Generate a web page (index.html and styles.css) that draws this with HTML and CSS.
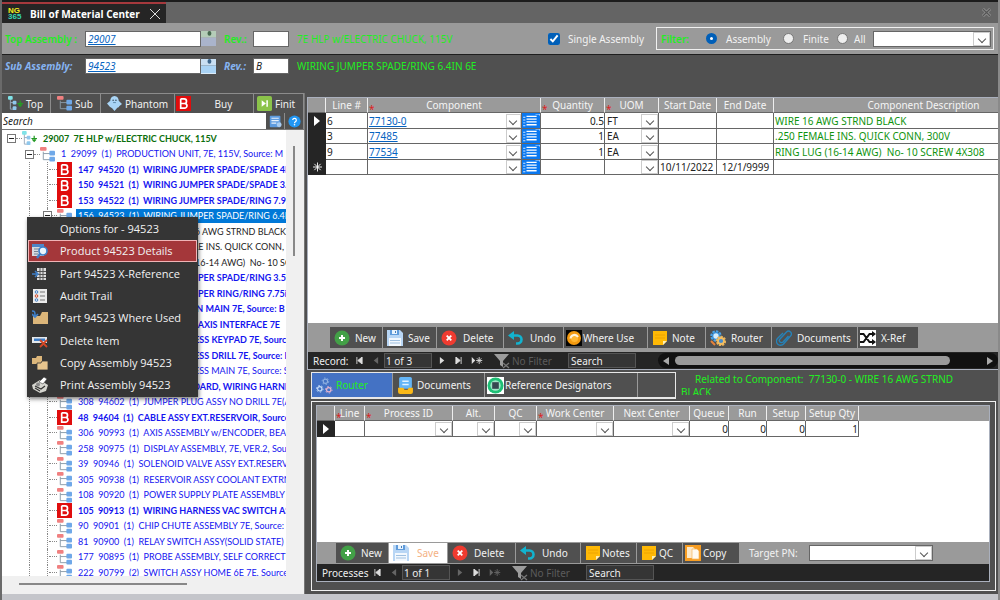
FILE: index.html
```html
<!DOCTYPE html>
<html lang="en">
<head>
  <meta charset="UTF-8" />
  <title>Bill of Material Center</title>
  <meta name="viewport" content="width=device-width, initial-scale=1" />
  <link rel="stylesheet" href="styles.css">
</head>
<body>
  <!-- Icon sprite -->
  <svg class="sprite" aria-hidden="true">
    <symbol id="i-sub" viewBox="0 0 16 16">
      <path d="M3.500 5v8.500H11M3.500 7H11" fill="none" stroke="#8a9aa8"/>
      <rect x="0" y="0" width="7" height="4" rx="1" fill="#f08080"/>
      <rect x="10" y="4" width="6" height="5" rx="1" fill="#6fa8e8"/>
      <rect x="10" y="10.500" width="6" height="5" rx="1" fill="#6fa8e8"/>
    </symbol>
    <symbol id="i-top" viewBox="0 0 16 16">
      <path d="M2.500 3v11H6M2.500 7H6" fill="none" stroke="#9ab"/>
      <rect x="0" y="0" width="5" height="4" rx="1" fill="#7fe3e8"/>
      <rect x="5" y="5" width="4" height="4" rx="1" fill="#8fc7ec"/>
      <rect x="5" y="11" width="4" height="4" rx="1" fill="#8fc7ec"/>
      <path d="M10 8h6M13 5v6M11 9l2 2 2-2" fill="none" stroke="#259a25" stroke-width="1.300"/>
    </symbol>
    <symbol id="i-buy" viewBox="0 0 16 16">
      <rect width="16" height="16" fill="#e00d0d"/>
      <path d="M5 3v10h4a2.700 2.500 0 0 0 0-5H5M5 3h3.700a2.400 2.400 0 0 1 0 5" fill="none" stroke="#fff" stroke-width="1.800"/>
    </symbol>
    <symbol id="i-ghost" viewBox="0 0 16 16">
      <path d="M8 0c3 0 4.500 2.500 4.500 5L16 8.500 13 11c0 1-1 1.500-2 1.500L8 16l-2.500-3L3 11.500 0 8l3.500-3C3.500 2.500 5 0 8 0z" fill="#a9d4f5"/>
      <circle cx="6.500" cy="4.500" r=".8" fill="#345"/><circle cx="9.500" cy="4.500" r=".8" fill="#345"/>
      <path d="M6.500 7h3" stroke="#5b87a8"/>
    </symbol>
    <symbol id="i-finite" viewBox="0 0 16 16">
      <rect width="16" height="16" rx="2" fill="#8bc34a"/>
      <path d="M5 4.500l4.500 3.500L5 11.500zM10 4.500h1.600v7H10z" fill="#fff"/>
    </symbol>
    <symbol id="i-form" viewBox="0 0 16 16">
      <rect x="1" y="1" width="13" height="14" rx="1" fill="#5d9be0"/>
      <path d="M3 4h9M3 7h9M3 10h6" stroke="#e5f0fb" stroke-width="1.500"/>
      <circle cx="12.500" cy="12" r="3" fill="#a8ccf2"/>
    </symbol>
    <symbol id="i-help" viewBox="0 0 16 16">
      <circle cx="8" cy="8" r="7.500" fill="#2196f3"/>
      <path d="M5.800 6.200a2.200 2.200 0 1 1 3.300 2C8.200 8.700 8 9 8 10" fill="none" stroke="#fff" stroke-width="1.500"/>
      <circle cx="8" cy="12" r="1" fill="#fff"/>
    </symbol>
    <symbol id="i-window" viewBox="0 0 16 16">
      <rect x="0" y="0" width="16" height="7" fill="#c9dff2"/>
      <rect x="0" y="7" width="16" height="9" fill="#a9d3f5"/>
      <rect x="7" y="0" width="4" height="5" rx="2" fill="#3d668c"/>
      <path d="M0 15.500h16" stroke="#e1eefa"/>
    </symbol>
    <symbol id="i-window-dim" viewBox="0 0 16 16">
      <rect x="0" y="0" width="16" height="7" fill="#b5cdb8"/>
      <rect x="0" y="7" width="16" height="9" fill="#aab4cb"/>
      <rect x="7" y="0" width="4" height="5" rx="2" fill="#47684f"/>
    </symbol>
    <symbol id="i-new" viewBox="0 0 16 16">
      <circle cx="8" cy="8" r="7.500" fill="#43a047"/>
      <path d="M8 5v6M5 8h6" stroke="#fff" stroke-width="2"/>
    </symbol>
    <symbol id="i-save" viewBox="0 0 16 16">
      <path d="M0 0h13l3 3v13H0z" fill="#b8d6f5"/>
      <path d="M3 0h9v5H3z" fill="#5f9bdb"/><path d="M5 0h5v4H5z" fill="#e8f3fd"/><path d="M8 1h1v2H8z" fill="#447db8"/>
      <path d="M2 8h12v8H2z" fill="#f2f8fe"/>
      <path d="M3 10.500h10M3 13h10" stroke="#9fc0e0"/>
    </symbol>
    <symbol id="i-delete" viewBox="0 0 16 16">
      <circle cx="8" cy="8" r="7.500" fill="#ef3b30"/>
      <path d="M5.700 5.700l4.600 4.600M10.300 5.700l-4.600 4.600" stroke="#fff" stroke-width="1.800"/>
    </symbol>
    <symbol id="i-undo" viewBox="0 0 16 16">
      <path d="M3 5.500h6.500a4 4 0 0 1 0 8H8" fill="none" stroke="#12b3cf" stroke-width="2.600"/>
      <path d="M0 5.500L6 1v9z" fill="#12b3cf"/>
    </symbol>
    <symbol id="i-where" viewBox="0 0 16 16">
      <rect width="16" height="16" fill="#050505"/>
      <circle cx="8" cy="8" r="7" fill="#f39a10"/>
      <circle cx="8.500" cy="8.500" r="3.500" fill="#ffb733"/>
      <path d="M4.500 8.500a4 4 0 0 1 7.500-1.500" fill="none" stroke="#fff3dc" stroke-width="2"/>
    </symbol>
    <symbol id="i-note" viewBox="0 0 16 16">
      <path d="M1 1h14v10l-4 4H1z" fill="#ffb906"/>
      <path d="M15 11h-4v4z" fill="#fff0b5"/>
      <path d="M3 5h10M3 8h10" stroke="#eda400"/>
    </symbol>
    <symbol id="i-router" viewBox="0 0 16 16">
      <circle cx="6" cy="6" r="4.200" fill="none" stroke="#4ba3e8" stroke-width="3" stroke-dasharray="2.200 1"/>
      <circle cx="6" cy="6" r="3.400" fill="#d5ecfb" stroke="#3a8fd4" stroke-width="1.500"/>
      <circle cx="11" cy="11" r="4" fill="none" stroke="#e8b25a" stroke-width="2.500" stroke-dasharray="2 1"/>
      <circle cx="11" cy="11" r="3" fill="#4a8ccc" stroke="#f3bd60" stroke-width="1.800"/>
      <path d="M1 11l4 4" stroke="#e7823a" stroke-width="2"/>
    </symbol>
    <symbol id="i-clip" viewBox="0 0 16 16">
      <path d="M12.500 6L7 12a2 2 0 0 1-3-3l6.500-7a2.700 2.700 0 0 1 4 4L7.500 14a4 4 0 0 1-6-5.500L7 3" fill="none" stroke="#2682b8" stroke-width="1.400"/>
    </symbol>
    <symbol id="i-xref" viewBox="0 0 16 16">
      <rect width="16" height="16" fill="#fff"/>
      <path d="M0 4h3.500l6 8H13M0 12h3.500l6-8H13" fill="none" stroke="#111" stroke-width="2"/>
      <path d="M12 1l4 3-4 3zM12 9l4 3-4 3z" fill="#111"/>
    </symbol>
    <symbol id="i-funnel" viewBox="0 0 16 16">
      <path d="M0 1h15L9 8v6l-3-2V8z" fill="#9c9c9c"/>
      <path d="M9 10l6 5M15 10l-6 5" stroke="#777" stroke-width="1.300"/>
    </symbol>
    <symbol id="i-cogs" viewBox="0 0 18 18">
      <g fill="none" stroke-width="1.200">
        <circle cx="10" cy="4.500" r="2.300" stroke="#8fb0e0"/><circle cx="10" cy="4.500" r="3.500" stroke="#8fb0e0" stroke-width="1" stroke-dasharray="1.600 2"/>
        <circle cx="4" cy="12.500" r="2.300" stroke="#c8def8"/><circle cx="4" cy="12.500" r="3.500" stroke="#c8def8" stroke-width="1" stroke-dasharray="1.600 2"/>
        <circle cx="13.500" cy="13.500" r="2.300" stroke="#e9b6cf"/><circle cx="13.500" cy="13.500" r="3.500" stroke="#e9b6cf" stroke-width="1" stroke-dasharray="1.600 2"/>
      </g>
    </symbol>
    <symbol id="i-tray" viewBox="0 0 16 16">
      <rect x="2" y="0" width="12" height="11" rx="1.500" fill="#64b5f6"/>
      <path d="M5 4h6M5 7h6" stroke="#e3f2fd" stroke-width="1.300"/>
      <path d="M1 10h5l1 2h3l1-2h4v4a2 2 0 0 1-2 2H3a2 2 0 0 1-2-2z" fill="#fbb917"/>
    </symbol>
    <symbol id="i-chip" viewBox="0 0 18 18">
      <rect width="18" height="18" fill="#fff"/>
      <circle cx="9" cy="9" r="8.500" fill="#1fbf75"/>
      <circle cx="9" cy="9" r="5.500" fill="#9fe6c4"/>
      <rect x="5.500" y="5.500" width="7" height="7" fill="#37474f"/>
    </symbol>
    <symbol id="i-copy" viewBox="0 0 16 16">
      <rect width="16" height="16" fill="#f79d22"/>
      <path d="M2 2h6l2 2v9H2z" fill="#fde9c8"/>
      <path d="M7 4h5l2 2v8H7z" fill="#fffaf0" stroke="#f3b45c" stroke-width=".7"/>
    </symbol>
    <symbol id="i-sheet" viewBox="0 0 16 15" preserveAspectRatio="none">
      <rect width="16" height="15" fill="#0a78f0"/>
      <path d="M4 2.500h9M4 5.500h9M4 8.500h9M4 11.500h9" stroke="#fff" stroke-width="1.400"/>
      <path d="M1 3.500h2M1 6.500h2M1 9.500h2M1 12.500h2M12 0h4v2" fill="none" stroke="#cfe5ff"/>
    </symbol>
    <symbol id="i-product" viewBox="0 0 16 16">
      <path d="M0 2h12v11H0z" fill="#d7dbe0"/><path d="M0 1h12v3H0z" fill="#4e86c8"/>
      <path d="M2 6h5M2 8.500h4M2 11h4" stroke="#768494"/>
      <circle cx="11" cy="8" r="4" fill="#eaf4fc" stroke="#3f7fc8" stroke-width="1.700"/>
      <path d="M8 11l-3 4" stroke="#3f7fc8" stroke-width="2.400"/>
    </symbol>
    <symbol id="i-cross" viewBox="0 0 16 16">
      <rect x="5" y="2" width="9" height="12" fill="#dcdcdc"/>
      <path d="M5 5.500h9M5 8.500h9M5 11.500h9M8 2v12M11 2v12" stroke="#555"/>
      <path d="M0 8h5M3 5l3 3-3 3" fill="none" stroke="#3f7fc8" stroke-width="1.500"/>
    </symbol>
    <symbol id="i-audit" viewBox="0 0 16 16">
      <rect x="1" y="1" width="14" height="14" fill="#ececec"/>
      <circle cx="4.500" cy="4" r="1.300" fill="none" stroke="#3f7fc8"/><circle cx="4.500" cy="8" r="1.300" fill="none" stroke="#d24726"/><circle cx="4.500" cy="12" r="1.300" fill="none" stroke="#3f7fc8"/>
      <path d="M8 4h5M8 8h5M8 12h5" stroke="#777"/>
    </symbol>
    <symbol id="i-used" viewBox="0 0 16 16">
      <path d="M1 6h7l2-4h6v12H1z" fill="#dcb67a"/>
      <path d="M0 1c3 0 3 1 3 5M0 4l3 3 3-3" fill="none" stroke="#3f7fc8" stroke-width="1.600"/>
    </symbol>
    <symbol id="i-remove" viewBox="0 0 16 16">
      <rect x="0" y="4" width="15" height="6" fill="#e4e8ec"/><rect x="2" y="5.500" width="11" height="2.500" fill="#3f7fc8"/>
      <path d="M8 7l7 7M15 7l-7 7" stroke="#d24726" stroke-width="1.800"/>
    </symbol>
    <symbol id="i-folders" viewBox="0 0 16 16">
      <path d="M0 3h4l1-2h5v8H0z" fill="#dcb67a"/>
      <path d="M5 8h4l1-2h6v9H5z" fill="#e6c48d" stroke="#353535" stroke-width=".8"/>
    </symbol>
    <symbol id="i-print" viewBox="0 0 16 16">
      <path d="M0 8l8-5 8 5-2 6-6 2-7-4z" fill="#d5d5cf"/>
      <path d="M7 5l5-5 3 2-4 5z" fill="#fff" stroke="#444" stroke-width=".6"/>
      <path d="M3 9l6 3 4-3M3 11l5 3" fill="none" stroke="#333" stroke-width="1.200"/>
      <circle cx="6" cy="7.500" r="2" fill="#888"/>
    </symbol>
  </svg>

  <header class="titlebar">
    <div class="doc-tab">
      <span class="logo"><b>NG</b><i>365</i></span>
      <strong>Bill of Material Center</strong>
      <button class="tab-close" aria-label="Close tab"><svg viewBox="0 0 10 10"><path d="M0 0l10 10M10 0L0 10" stroke="#ddd"/></svg></button>
    </div>
    <button class="win-close" aria-label="Close window"><svg viewBox="0 0 10 10"><path d="M1 1l8 8M9 1L1 9" stroke="#999" stroke-width="3"/><path d="M1 1l8 8M9 1L1 9" stroke="#555" stroke-width="1.500"/></svg></button>
  </header>

  <section class="bar bar-top">
    <label class="bar-label" for="top-pn">Top Assembly :</label>
    <input class="field pn" id="top-pn" value="29007">
    <button class="pick" aria-label="Open top assembly"><svg><use href="#i-window-dim"/></svg></button>
    <label class="rev-label" for="top-rev">Rev.:</label>
    <input class="field rev" id="top-rev" value="">
    <span class="bar-desc">7E HLP w/ELECTRIC CHUCK, 115V</span>
    <label class="single"><input type="checkbox" checked> Single Assembly</label>
    <div class="filter">
      <span class="filter-title">Filter:</span>
      <label class="f-assembly"><input type="radio" name="filter" checked> Assembly</label>
      <label class="f-finite"><input type="radio" name="filter"> Finite</label>
      <label class="f-all"><input type="radio" name="filter"> All</label>
      <span class="combo boxed"><select aria-label="Filter value"><option></option></select></span>
    </div>
  </section>

  <section class="bar bar-sub">
    <label class="bar-label" for="sub-pn">Sub Assembly:</label>
    <input class="field pn" id="sub-pn" value="94523">
    <button class="pick" aria-label="Open sub assembly"><svg><use href="#i-window"/></svg></button>
    <label class="rev-label" for="sub-rev">Rev.:</label>
    <input class="field rev" id="sub-rev" value="B">
    <span class="bar-desc">WIRING JUMPER SPADE/RING 6.4IN 6E</span>
  </section>

  <main>
    <aside class="side">
      <div class="side-tools">
        <button class="t-top"><svg><use href="#i-top"/></svg>Top</button>
        <button class="t-sub"><svg><use href="#i-sub"/></svg>Sub</button>
        <button class="t-phantom"><svg><use href="#i-ghost"/></svg>Phantom</button>
        <button class="t-buy"><svg><use href="#i-buy"/></svg><span>Buy</span></button>
        <button class="t-finit"><svg><use href="#i-finite"/></svg>Finit</button>
      </div>
      <div class="side-search">
        <input placeholder="Search" aria-label="Search tree">
        <button aria-label="Form"><svg><use href="#i-form"/></svg></button>
        <button aria-label="Help"><svg><use href="#i-help"/></svg></button>
      </div>

      <div class="tree-box">
        <ul class="tree">
          <li class="root"><span class="exp"></span><span class="dash"></span><svg><use href="#i-top"/></svg><b>29007  7E HLP w/ELECTRIC CHUCK, 115V</b></li>
          <li class="lvl1"><span class="exp"></span><span class="dash"></span><svg><use href="#i-sub"/></svg><span>1  29099  (1)  PRODUCTION UNIT, 7E, 115V, Source: M</span></li>
          <li><i></i><i class="tee"></i><svg><use href="#i-buy"/></svg><b>147  94520  (1)  WIRING JUMPER SPADE/SPADE 4IN</b></li>
          <li><i></i><i class="tee"></i><svg><use href="#i-buy"/></svg><b>150  94521  (1)  WIRING JUMPER SPADE/SPADE 3.5IN</b></li>
          <li><i></i><i class="tee"></i><svg><use href="#i-buy"/></svg><b>153  94522  (1)  WIRING JUMPER SPADE/RING 7.9IN</b></li>
          <li class="selected"><i></i><i class="tee"><em class="exp"></em></i><svg><use href="#i-sub"/></svg><span>156  94523  (1)  WIRING JUMPER SPADE/RING 6.4IN 6E</span></li>
          <li class="part"><i></i><i></i><span>6  77130-0  (0.5) WIRE 16 AWG STRND BLACK, Source: B</span></li>
          <li class="part"><i></i><i></i><span>3  77485  (1) .250 FEMALE INS. QUICK CONN, 300V</span></li>
          <li class="part"><i></i><i></i><span>9  77534  (1) RING LUG (16-14 AWG)  No- 10 SCREW</span></li>
          <li><i></i><i class="tee"></i><svg><use href="#i-buy"/></svg><b>159  94524  (1)  WIRING JUMPER SPADE/RING 3.5IN</b></li>
          <li><i></i><i class="tee"></i><svg><use href="#i-buy"/></svg><b>162  94525  (1)  WIRING JUMPER RING/RING 7.75in</b></li>
          <li><i></i><i class="tee"></i><svg><use href="#i-buy"/></svg><b>165  94526  (1)  CONNECTION MAIN 7E, Source: B</b></li>
          <li><i></i><i class="tee"></i><svg><use href="#i-buy"/></svg><b>168  94527  (1)  HARNESS  K-AXIS INTERFACE 7E</b></li>
          <li><i></i><i class="tee"></i><svg><use href="#i-buy"/></svg><b>171  94528  (1)  WIRE HARNESS KEYPAD 7E, Source: B</b></li>
          <li><i></i><i class="tee"></i><svg><use href="#i-buy"/></svg><b>174  94529  (1)  WIRE HARNESS DRILL 7E, Source: B</b></li>
          <li><i></i><i class="tee"></i><svg><use href="#i-sub"/></svg><span>300  94600  (1)  WIRE HARNESS MAIN 7E, Source: S</span></li>
          <li><i></i><i class="tee"></i><svg><use href="#i-buy"/></svg><b>303  94601  (1)  MAIN KEYBOARD, WIRING HARNESS</b></li>
          <li><i></i><i class="tee"></i><svg><use href="#i-sub"/></svg><span>308  94602  (1)  JUMPER PLUG ASSY NO DRILL 7E(A, Source: M</span></li>
          <li><i></i><i class="tee"></i><svg><use href="#i-buy"/></svg><b>48  94604  (1)  CABLE ASSY EXT.RESERVOIR, Source: B</b></li>
          <li><i></i><i class="tee"></i><svg><use href="#i-sub"/></svg><span>306  90993  (1)  AXIS ASSEMBLY w/ENCODER, BEARING</span></li>
          <li><i></i><i class="tee"></i><svg><use href="#i-sub"/></svg><span>258  90975  (1)  DISPLAY ASSEMBLY, 7E, VER.2, Source: M</span></li>
          <li><i></i><i class="tee"></i><svg><use href="#i-sub"/></svg><span>39  90946  (1)  SOLENOID VALVE ASSY EXT.RESERVOIR</span></li>
          <li><i></i><i class="tee"></i><svg><use href="#i-sub"/></svg><span>305  90938  (1)  RESERVOIR ASSY COOLANT EXTRNAL</span></li>
          <li><i></i><i class="tee"></i><svg><use href="#i-sub"/></svg><span>108  90920  (1)  POWER SUPPLY PLATE ASSEMBLY 7E, Source</span></li>
          <li><i></i><i class="tee"></i><svg><use href="#i-buy"/></svg><b>105  90913  (1)  WIRING HARNESS VAC SWITCH ASSY</b></li>
          <li><i></i><i class="tee"></i><svg><use href="#i-sub"/></svg><span>90  90901  (1)  CHIP CHUTE ASSEMBLY 7E, Source: M</span></li>
          <li><i></i><i class="tee"></i><svg><use href="#i-sub"/></svg><span>81  90900  (1)  RELAY SWITCH ASSY(SOLID STATE) 7E, Source</span></li>
          <li><i></i><i class="tee"></i><svg><use href="#i-sub"/></svg><span>177  90895  (1)  PROBE ASSEMBLY, SELF CORRECTING</span></li>
          <li><i></i><i class="tee"></i><svg><use href="#i-sub"/></svg><span>222  90799  (2)  SWITCH ASSY HOME 6E 7E, Source: S</span></li>
        </ul>
        <div class="vscroll"><span></span></div>
        <div class="hscroll"><span></span></div>
      </div>

      <!-- Context menu of the selected node -->
      <div class="menu" role="menu">
        <button role="menuitem"><svg></svg>Options for - 94523</button>
        <button role="menuitem" class="active"><svg><use href="#i-product"/></svg>Product 94523 Details</button>
        <button role="menuitem"><svg><use href="#i-cross"/></svg>Part 94523 X-Reference</button>
        <button role="menuitem"><svg><use href="#i-audit"/></svg>Audit Trail</button>
        <button role="menuitem"><svg><use href="#i-used"/></svg>Part 94523 Where Used</button>
        <button role="menuitem"><svg><use href="#i-remove"/></svg>Delete Item</button>
        <button role="menuitem"><svg><use href="#i-folders"/></svg>Copy Assembly 94523</button>
        <button role="menuitem"><svg><use href="#i-print"/></svg>Print Assembly 94523</button>
      </div>
    </aside>

    <div class="content">
      <section class="sheet components">
        <div class="sheet-body">
          <table class="grid">
            <colgroup><col class="w18"><col class="w42"><col class="w154"><col class="w19"><col class="w64"><col class="w54"><col class="w58"><col class="w57"><col class="w300"></colgroup>
            <thead>
              <tr><th></th><th>Line #</th><th colspan="2" class="req">Component</th><th class="req">Quantity</th><th class="req">UOM</th><th>Start Date</th><th>End Date</th><th>Component Description</th></tr>
            </thead>
            <tbody>
              <tr><td class="mark"><svg viewBox="0 0 6 10"><path d="M0 0l6 5-6 5z" fill="#fff"/></svg></td><td>6</td><td><div class="lookup"><a href="#">77130-0</a><button class="drop" aria-label="Pick component"></button></div></td><td class="sheet-ico"><svg><use href="#i-sheet"/></svg></td><td class="num">0.5</td><td><span class="combo"><select aria-label="UOM"><option>FT</option></select></span></td><td></td><td></td><td class="desc">WIRE 16 AWG STRND BLACK</td></tr>
              <tr><td class="mark"></td><td>3</td><td><div class="lookup"><a href="#">77485</a><button class="drop" aria-label="Pick component"></button></div></td><td class="sheet-ico"><svg><use href="#i-sheet"/></svg></td><td class="num">1</td><td><span class="combo"><select aria-label="UOM"><option>EA</option></select></span></td><td></td><td></td><td class="desc">.250 FEMALE INS. QUICK CONN, 300V</td></tr>
              <tr><td class="mark"></td><td>9</td><td><div class="lookup"><a href="#">77534</a><button class="drop" aria-label="Pick component"></button></div></td><td class="sheet-ico"><svg><use href="#i-sheet"/></svg></td><td class="num">1</td><td><span class="combo"><select aria-label="UOM"><option>EA</option></select></span></td><td></td><td></td><td class="desc">RING LUG (16-14 AWG)  No- 10 SCREW 4X308</td></tr>
              <tr><td class="mark"><svg class="star" viewBox="0 0 10 10"><path d="M5 0v10M0 5h10M1.500 1.500l7 7M8.500 1.500l-7 7" stroke="#fff"/></svg></td><td></td><td><div class="lookup"><button class="drop" aria-label="Pick component"></button></div></td><td class="sheet-ico"><svg><use href="#i-sheet"/></svg></td><td></td><td><span class="combo"><select aria-label="UOM"><option></option></select></span></td><td>10/11/2022</td><td class="mid">12/1/9999</td><td></td></tr>
            </tbody>
          </table>
        </div>
        <div class="tools">
          <button class="b-new"><svg><use href="#i-new"/></svg>New</button>
          <button class="b-save"><svg><use href="#i-save"/></svg>Save</button>
          <button class="b-delete"><svg><use href="#i-delete"/></svg>Delete</button>
          <button class="b-undo"><svg><use href="#i-undo"/></svg>Undo</button>
          <button class="b-where"><svg><use href="#i-where"/></svg>Where Use</button>
          <button class="b-note"><svg><use href="#i-note"/></svg>Note</button>
          <button class="b-router"><svg><use href="#i-router"/></svg>Router</button>
          <button class="b-docs"><svg><use href="#i-clip"/></svg>Documents</button>
          <button class="b-xref"><svg><use href="#i-xref"/></svg>X-Ref</button>
        </div>
        <div class="recnav">
          <span class="rec-title">Record:</span>
          <button aria-label="First"><svg viewBox="0 0 8 8"><path d="M1 0v8M7 0L2 4l5 4z" fill="#ddd" stroke="#ddd"/></svg></button>
          <button class="off" aria-label="Previous"><svg viewBox="0 0 8 8"><path d="M7 0L2 4l5 4z" fill="#ddd"/></svg></button>
          <input class="rec-pos" value="1 of 3" aria-label="Record position">
          <button aria-label="Next"><svg viewBox="0 0 8 8"><path d="M1 0l5 4-5 4z" fill="#ddd"/></svg></button>
          <button aria-label="Last"><svg viewBox="0 0 8 8"><path d="M7 0v8M1 0l5 4-5 4z" fill="#ddd" stroke="#ddd"/></svg></button>
          <button class="wide" aria-label="New record"><svg viewBox="0 0 12 8"><path d="M0 0l4 4-4 4z" fill="#ddd"/><path d="M8.500 0v8M5 4h7M6 1.500l5 5M11 1.500l-5 5" stroke="#ddd"/></svg></button>
          <span class="nofilter"><svg><use href="#i-funnel"/></svg>No Filter</span>
          <input class="rec-search" placeholder="Search" aria-label="Search records">
          <div class="track"><svg viewBox="0 0 6 8"><path d="M6 0L0 4l6 4z" fill="#aaa"/></svg><span></span><svg viewBox="0 0 6 8"><path d="M0 0l6 4-6 4z" fill="#aaa"/></svg></div>
        </div>
      </section>

      <div class="detail-head">
        <nav class="tabs">
          <button class="tab-router on"><svg><use href="#i-cogs"/></svg>Router</button>
          <button class="tab-docs"><svg><use href="#i-tray"/></svg>Documents</button>
          <button class="tab-ref"><svg><use href="#i-chip"/></svg>Reference Designators</button>
        </nav>
        <p class="related">Related to Component:  77130-0 - WIRE 16 AWG STRND BLACK</p>
      </div>

      <div class="frame">
        <section class="sheet processes">
          <div class="sheet-body">
            <table class="grid">
              <colgroup><col class="w18"><col class="w30"><col class="w88"><col class="w42"><col class="w42"><col class="w77"><col class="w76"><col class="w39"><col class="w38"><col class="w39"><col class="w53"></colgroup>
              <thead>
                <tr><th></th><th class="req">Line</th><th class="req">Process ID</th><th>Alt.</th><th>QC</th><th class="req">Work Center</th><th>Next Center</th><th>Queue</th><th>Run</th><th>Setup</th><th>Setup Qty</th></tr>
              </thead>
              <tbody>
                <tr><td class="mark"><svg viewBox="0 0 6 10"><path d="M0 0l6 5-6 5z" fill="#fff"/></svg></td><td></td><td><span class="combo"><select aria-label="Process ID"><option></option></select></span></td><td><span class="combo"><select aria-label="Alt"><option></option></select></span></td><td><span class="combo"><select aria-label="QC"><option></option></select></span></td><td><span class="combo"><select aria-label="Work Center"><option></option></select></span></td><td><span class="combo"><select aria-label="Next Center"><option></option></select></span></td><td class="num">0</td><td class="num">0</td><td class="num">0</td><td class="num">1</td></tr>
              </tbody>
            </table>
          </div>
          <div class="tools">
            <button class="b-new"><svg><use href="#i-new"/></svg>New</button>
            <button class="b-save hot"><svg><use href="#i-save"/></svg>Save</button>
            <button class="b-delete"><svg><use href="#i-delete"/></svg>Delete</button>
            <button class="b-undo"><svg><use href="#i-undo"/></svg>Undo</button>
            <button class="b-note"><svg><use href="#i-note"/></svg>Notes</button>
            <button class="b-qc"><svg><use href="#i-note"/></svg>QC</button>
            <button class="b-copy"><svg><use href="#i-copy"/></svg>Copy</button>
            <label for="target">Target PN:</label>
            <span class="combo boxed"><select id="target"><option></option></select></span>
          </div>
          <div class="recnav">
            <span class="rec-title">Processes</span>
            <button aria-label="First"><svg viewBox="0 0 8 8"><path d="M1 0v8M7 0L2 4l5 4z" fill="#ddd" stroke="#ddd"/></svg></button>
            <button class="off" aria-label="Previous"><svg viewBox="0 0 8 8"><path d="M7 0L2 4l5 4z" fill="#ddd"/></svg></button>
            <input class="rec-pos" value="1 of 1" aria-label="Process position">
            <button class="off" aria-label="Next"><svg viewBox="0 0 8 8"><path d="M1 0l5 4-5 4z" fill="#ddd"/></svg></button>
            <button aria-label="Last"><svg viewBox="0 0 8 8"><path d="M7 0v8M1 0l5 4-5 4z" fill="#ddd" stroke="#ddd"/></svg></button>
            <button class="wide off" aria-label="New process"><svg viewBox="0 0 12 8"><path d="M0 0l4 4-4 4z" fill="#ddd"/><path d="M8.500 0v8M5 4h7M6 1.500l5 5M11 1.500l-5 5" stroke="#ddd"/></svg></button>
            <span class="nofilter"><svg><use href="#i-funnel"/></svg>No Filter</span>
            <input class="rec-search" placeholder="Search" aria-label="Search processes">
          </div>
        </section>
      </div>
    </div>
  </main>
  <footer></footer>
</body>
</html>
```

FILE: styles.css
```css
* {
  box-sizing: border-box;
}
body {
  margin: 0;
  height: 100vh;
  display: flex;
  flex-direction: column;
  overflow: hidden;
  font-family: 'Noto Sans', 'Open Sans', sans-serif;
  font-size: 10px;
  line-height: 14px;
  color: #f2f2f2;
  background: #505050;
  border-left: 2px solid #6a6a6a;
  border-right: 2px solid #8a8a8a;
}
button, input, select {
  font: inherit;
  color: inherit;
  border: 0;
  margin: 0;
  padding: 0;
  background: none;
  border-radius: 0;
}
svg {
  display: block;
  flex: none;
}
.sprite {
  position: absolute;
  width: 0;
  height: 0;
}

/* Title bar */
.titlebar {
  display: flex;
  justify-content: space-between;
  align-items: center;
  height: 23px;
  border-top: 2px solid #1c1c1c;
  background: #646464;
}
.doc-tab {
  display: flex;
  align-items: center;
  height: 21px;
  padding: 0 6px;
  background: #252525;
  border-top: 2px solid #a5393d;
  font-family: 'Open Sans', sans-serif;
  color: #fff;
}
.doc-tab strong {
  margin: 0 10px 0 8px;
}
.logo {
  display: grid;
  width: 14px;
  font: bold 8px/6px 'Liberation Sans', sans-serif;
  color: #f2ee1c;
}
.logo i {
  font-style: normal;
  color: #35d6b4;
}
.tab-close svg {
  width: 10px;
  height: 10px;
}
.win-close {
  margin-right: 7px;
}
.win-close svg {
  width: 9px;
  height: 9px;
}

/* Assembly bars */
.bar {
  display: flex;
  align-items: center;
  padding-left: 3px;
}
.bar-top {
  height: 32px;
  background: #9a9a9a;
  border-bottom: 1px solid #1e1e1e;
  color: #22ee22;
}
.bar-sub {
  height: 38px;
  padding-bottom: 16px;
  color: #22ee22;
}
.bar-label {
  width: 80px;
  font-weight: 600;
}
.bar-sub .bar-label, .bar-sub .rev-label {
  color: #86b4f2;
  font-style: italic;
  font-weight: 700;
}
.field {
  height: 16px;
  padding: 0 2px;
  background: #fff;
  border: 1px solid #666;
  color: #222;
}
.field.pn {
  width: 116px;
  color: #0563c1;
  font-style: italic;
  text-decoration: underline;
}
.field.rev {
  width: 36px;
  font-style: italic;
}
.pick svg {
  width: 15px;
  height: 15px;
}
.rev-label {
  width: 29px;
  margin-left: 8px;
  font-weight: 600;
}
.bar-desc {
  margin-left: 8px;
}
.single {
  display: flex;
  align-items: center;
  gap: 8px;
  margin-left: auto;
  color: #f2f2f2;
}
.single input {
  width: 12px;
  height: 12px;
  accent-color: #005fb8;
}
.filter {
  display: flex;
  align-items: center;
  width: 338px;
  height: 23px;
  margin: 0 4px 0 12px;
  padding: 0 2px 0 4px;
  border: 1px solid #f0f0f0;
  color: #f2f2f2;
}
.filter label {
  display: flex;
  align-items: center;
}
.filter input {
  appearance: none;
  width: 11px;
  height: 11px;
  margin-right: 9px;
  border: 1px solid #777;
  border-radius: 50%;
  background: #eee;
}
.filter input:checked {
  border: 4px solid #005fb8;
  background: #fff;
}
.filter-title {
  width: 45px;
  font-weight: 600;
  color: #22ee22;
}
.f-assembly {
  width: 77px;
}
.f-finite {
  width: 54px;
}
.filter .f-all input {
  margin-right: 6px;
}
.filter .combo {
  width: 118px;
  margin-left: auto;
}

/* Combo boxes */
.combo {
  position: relative;
  display: block;
  height: 14px;
  color: #222;
}
.combo select {
  appearance: none;
  display: block;
  width: 100%;
  height: 100%;
  padding-left: 1px;
}
.combo.boxed {
  height: 16px;
  border: 1px solid #666;
  background: #fff;
}
.combo::after, .drop::after {
  content: '';
  position: absolute;
  right: 5px;
  top: 4px;
  width: 5px;
  height: 5px;
  border-right: 1px solid #555;
  border-bottom: 1px solid #555;
  transform: rotate(45deg);
}
.combo::before {
  content: '';
  position: absolute;
  right: 0;
  top: 0;
  bottom: 0;
  width: 15px;
  border: 1px solid #ccc;
}
.drop {
  position: relative;
  width: 15px;
  height: 14px;
  border: 1px solid #ccc;
}
.drop::after {
  right: 4px;
  top: 3px;
}

main {
  flex: 1;
  display: flex;
  min-height: 0;
}
footer {
  height: 6px;
  background: #c4c5ca;
}

/* Left side */
.side {
  position: relative;
  display: flex;
  flex-direction: column;
  width: 302px;
}
.side-tools {
  display: flex;
  height: 20px;
  border-top: 1px solid #8c8c8c;
}
.side-tools button {
  display: flex;
  align-items: center;
  gap: 3px;
  padding-left: 6px;
  border-right: 1px solid #8c8c8c;
  white-space: nowrap;
}
.side-tools svg {
  width: 15px;
  height: 15px;
}
.t-top {
  width: 49px;
}
.t-sub {
  width: 50px;
}
.t-phantom {
  width: 74px;
}
.side-tools .t-buy {
  width: 79px;
  padding-left: 1px;
}
.t-buy span {
  margin: 0 auto;
}
.side-tools .t-finit {
  flex: 1;
  padding-left: 3px;
}
.side-search {
  display: flex;
  height: 16px;
}
.side-search input {
  flex: 1;
  min-width: 0;
  padding-left: 1px;
  background: #fff;
  color: #222;
}
::placeholder {
  color: inherit;
  opacity: 1;
}
.side-search input::placeholder {
  font-style: italic;
}
.side-search button {
  width: 19px;
  padding-left: 3px;
  border-right: 1px solid #8c8c8c;
}
.side-search svg {
  width: 13px;
  height: 13px;
}
.tree-box {
  flex: 1;
  display: grid;
  grid-template-columns: 1fr 18px;
  grid-template-rows: 1fr 18px;
  min-height: 0;
  background: #f0f0f0;
  border-top: 1px solid #777;
}
.tree {
  display: grid;
  grid-auto-rows: 15px 16px;
  margin: 0;
  padding: 1px 0 0;
  overflow: hidden;
  list-style: none;
  background: #fff;
  color: #1414f0;
  font-family: Lato, 'Open Sans', sans-serif;
  font-size: 9px;
}
.tree li {
  display: flex;
  align-items: center;
  padding-left: 27px;
  white-space: pre;
}
.tree li > svg {
  width: 15px;
  height: 15px;
  margin-right: 4px;
}
.tree li > span, .tree li > b {
  padding-left: 2px;
}
.tree li > i {
  align-self: stretch;
  width: 18px;
  border-left: 1px dotted #888;
}
.tree li > .tee {
  position: relative;
  width: 10px;
}
.tee::after {
  content: '';
  position: absolute;
  left: 1px;
  right: 0;
  top: 7px;
  border-top: 1px dotted #888;
}
.exp {
  display: block;
  width: 9px;
  height: 9px;
  border: 1px solid #777;
  background: linear-gradient(#222, #222) center / 5px 1px no-repeat #fff;
}
.tree li > .exp {
  padding: 0;
}
.tee .exp {
  position: absolute;
  z-index: 1;
  left: -5px;
  top: 3px;
}
.dash {
  width: 6px;
  border-top: 1px dotted #888;
}
.tree .root {
  padding-left: 5px;
  color: #0b6e0b;
}
.tree .lvl1 {
  padding-left: 23px;
}
.tree .selected > span {
  flex: 1;
  min-width: 0;
  background: #0078d7;
  color: #fff;
}
.tree .part {
  color: #222;
}
.tree .part > span {
  padding-left: 31px;
}
.vscroll span {
  display: block;
  width: 2px;
  height: 110px;
  margin: 16px 0 0 7px;
  background: #888;
}
.hscroll {
  grid-column: 1 / -1;
}
.hscroll span {
  display: block;
  width: 168px;
  height: 2px;
  margin: 7px 0 0 17px;
  background: #888;
}

/* Context menu */
.menu {
  position: absolute;
  z-index: 5;
  left: 25px;
  top: 124px;
  width: 171px;
  display: grid;
  grid-auto-rows: 22px 22px 23px;
  padding: 1px;
  background: #353535;
  box-shadow: 1px 2px 4px rgba(0, 0, 0, 0.5);
  font-family: 'Open Sans', sans-serif;
  font-size: 11px;
}
.menu button {
  display: flex;
  align-items: center;
  gap: 12px;
  padding-left: 3px;
  border: 1px solid transparent;
}
.menu .active {
  background: #a4373a;
  border-color: #f0b4b6;
}
.menu svg {
  width: 16px;
  height: 16px;
}

/* Right side */
.content {
  flex: 1;
  display: flex;
  flex-direction: column;
  gap: 2px;
  min-width: 0;
  padding: 4px 0 3px 2px;
  border-left: 1px solid #777;
}
.sheet {
  display: flex;
  flex-direction: column;
  border: 1px solid #aab0bd;
  background: #fff;
}
.components {
  flex: 1;
  min-height: 0;
  border-right: 0;
}
.sheet-body {
  flex: 1;
  overflow: hidden;
  color: #222;
}
.grid {
  width: 0;
  table-layout: fixed;
  border-collapse: separate;
  border-spacing: 0;
}
.w18 { width: 18px; }
.w19 { width: 19px; }
.w30 { width: 30px; }
.w38 { width: 38px; }
.w39 { width: 39px; }
.w42 { width: 42px; }
.w53 { width: 53px; }
.w54 { width: 54px; }
.w57 { width: 57px; }
.w58 { width: 58px; }
.w64 { width: 64px; }
.w76 { width: 76px; }
.w77 { width: 77px; }
.w88 { width: 88px; }
.w154 { width: 154px; }
.w300 { width: 300px; }
.grid th {
  position: relative;
  height: 15px;
  padding: 0;
  background: #9a9a9a;
  border-right: 1px solid #eee;
  border-bottom: 1px solid #666;
  color: #f5f5f5;
  font-weight: 400;
  line-height: 14px;
  white-space: nowrap;
}
.req::before {
  content: '*';
  position: absolute;
  left: 1px;
  top: 4px;
  color: #d22;
}
.grid td {
  height: 16px;
  padding: 0 0 0 1px;
  border-right: 1px solid #666;
  border-bottom: 1px solid #666;
  line-height: 14px;
  white-space: pre;
}
.grid tr:nth-child(even) td {
  height: 15px;
}
.grid .mark {
  background: #252525;
  border-color: #252525;
}
.mark svg {
  width: 6px;
  height: 10px;
  margin: 0 auto;
}
.mark .star {
  width: 9px;
}
.grid .num {
  text-align: right;
}
.grid .mid {
  text-align: center;
}
.grid .desc {
  color: #0f930f;
}
.lookup {
  display: flex;
  align-items: center;
}
.lookup .drop {
  margin-left: auto;
}
.lookup a {
  color: #0563c1;
}
.grid .sheet-ico {
  padding: 0;
  background: #0a78f0;
}
.sheet-ico svg {
  width: 18px;
  height: 14px;
}

/* Button strips */
.tools {
  display: flex;
  align-items: center;
  height: 29px;
  padding-left: 22px;
  background: #9a9a9a;
}
.tools button {
  display: flex;
  align-items: center;
  height: 21px;
  gap: 5px;
  padding-left: 4px;
  border-right: 1px solid #9a9a9a;
  background: #505050;
  white-space: nowrap;
}
.tools svg {
  width: 16px;
  height: 16px;
}
.tools .b-new { width: 53px; }
.tools .b-save { width: 54px; }
.tools .b-delete { width: 67px; gap: 6px; }
.tools .b-undo { width: 60px; gap: 6px; }
.tools .b-where { width: 84px; gap: 1px; padding-left: 2px; }
.tools .b-note { width: 58px; gap: 4px; }
.tools .b-router { width: 66px; }
.tools .b-docs { width: 86px; }
.tools .b-xref { width: 61px; padding-left: 2px; }
.processes .tools {
  height: 22px;
  padding-left: 19px;
}
.processes .tools button {
  height: 20px;
}
.processes .b-save { width: 59px; gap: 8px; }
.processes .b-delete { width: 68px; }
.processes .b-undo { width: 65px; }
.processes .b-note { width: 56px; gap: 1px; }
.processes .b-qc { width: 46px; gap: 2px; }
.processes .b-copy { width: 57px; gap: 2px; padding-left: 2px; }
.tools .hot {
  background: #fff;
  color: #f4b183;
}
.tools label {
  width: 60px;
  margin-left: 9px;
}
.tools .combo {
  width: 124px;
}

/* Record navigator */
.recnav {
  display: flex;
  align-items: center;
  height: 17px;
  padding-left: 5px;
  background: #252525;
  color: #eee;
}
.rec-title {
  width: 39px;
}
.recnav button {
  width: 16px;
  padding-left: 4px;
}
.recnav button.wide {
  width: 24px;
}
.recnav .off {
  opacity: 0.35;
}
.recnav button svg {
  width: 7px;
  height: 7px;
}
.recnav .wide svg {
  width: 12px;
}
.rec-pos {
  width: 48px;
  height: 15px;
  margin-right: 3px;
  padding-left: 1px;
  background: #353535;
  border: 1px solid #555;
}
.nofilter {
  display: flex;
  align-items: center;
  width: 74px;
  margin-left: 3px;
  gap: 2px;
  color: #5c5c5c;
}
.nofilter svg {
  width: 16px;
  height: 16px;
}
.rec-search {
  width: 68px;
  height: 15px;
  padding-left: 2px;
  background: #353535;
  border: 1px solid #555;
}
.track {
  flex: 1;
  display: flex;
  align-items: center;
  gap: 6px;
  height: 15px;
  margin-left: 22px;
  padding: 0 5px;
  border-radius: 8px;
  background: #111;
}
.track span {
  width: 275px;
  height: 9px;
  margin-right: auto;
  border-radius: 5px;
  background: #9a9a9a;
}
.track svg {
  width: 6px;
  height: 8px;
}

/* Detail tabs */
.detail-head {
  display: flex;
  height: 27px;
  padding-left: 4px;
}
.tabs {
  display: flex;
  width: 365px;
  border: 1px solid #e8e8e8;
  border-bottom-width: 2px;
}
.tabs button {
  display: flex;
  align-items: center;
  gap: 3px;
  padding-left: 4px;
  border-right: 1px solid #9a9a9a;
  white-space: nowrap;
}
.tabs svg {
  width: 17px;
  height: 17px;
}
.tab-router {
  width: 81px;
}
.tab-docs {
  width: 92px;
}
.tabs .tab-ref {
  width: 153px;
  gap: 1px;
  padding-left: 2px;
}
.tabs .on {
  background: #4472c4;
  color: #22ee22;
}
.related {
  flex: 1;
  height: 23px;
  margin: 0 20px 0 5px;
  padding-top: 1px;
  overflow: hidden;
  line-height: 13px;
  text-indent: 14px;
  white-space: pre-wrap;
  color: #22ee22;
}
.frame {
  margin: 0 2px 0 4px;
  padding: 3px 5px 8px 4px;
  border: 1px solid #f0f0f0;
}
.processes .sheet-body {
  min-height: 136px;
  background: linear-gradient(#9a9a9a, #9a9a9a) top / 100% 15px no-repeat;
}
.processes .rec-title {
  width: 48px;
}
```
